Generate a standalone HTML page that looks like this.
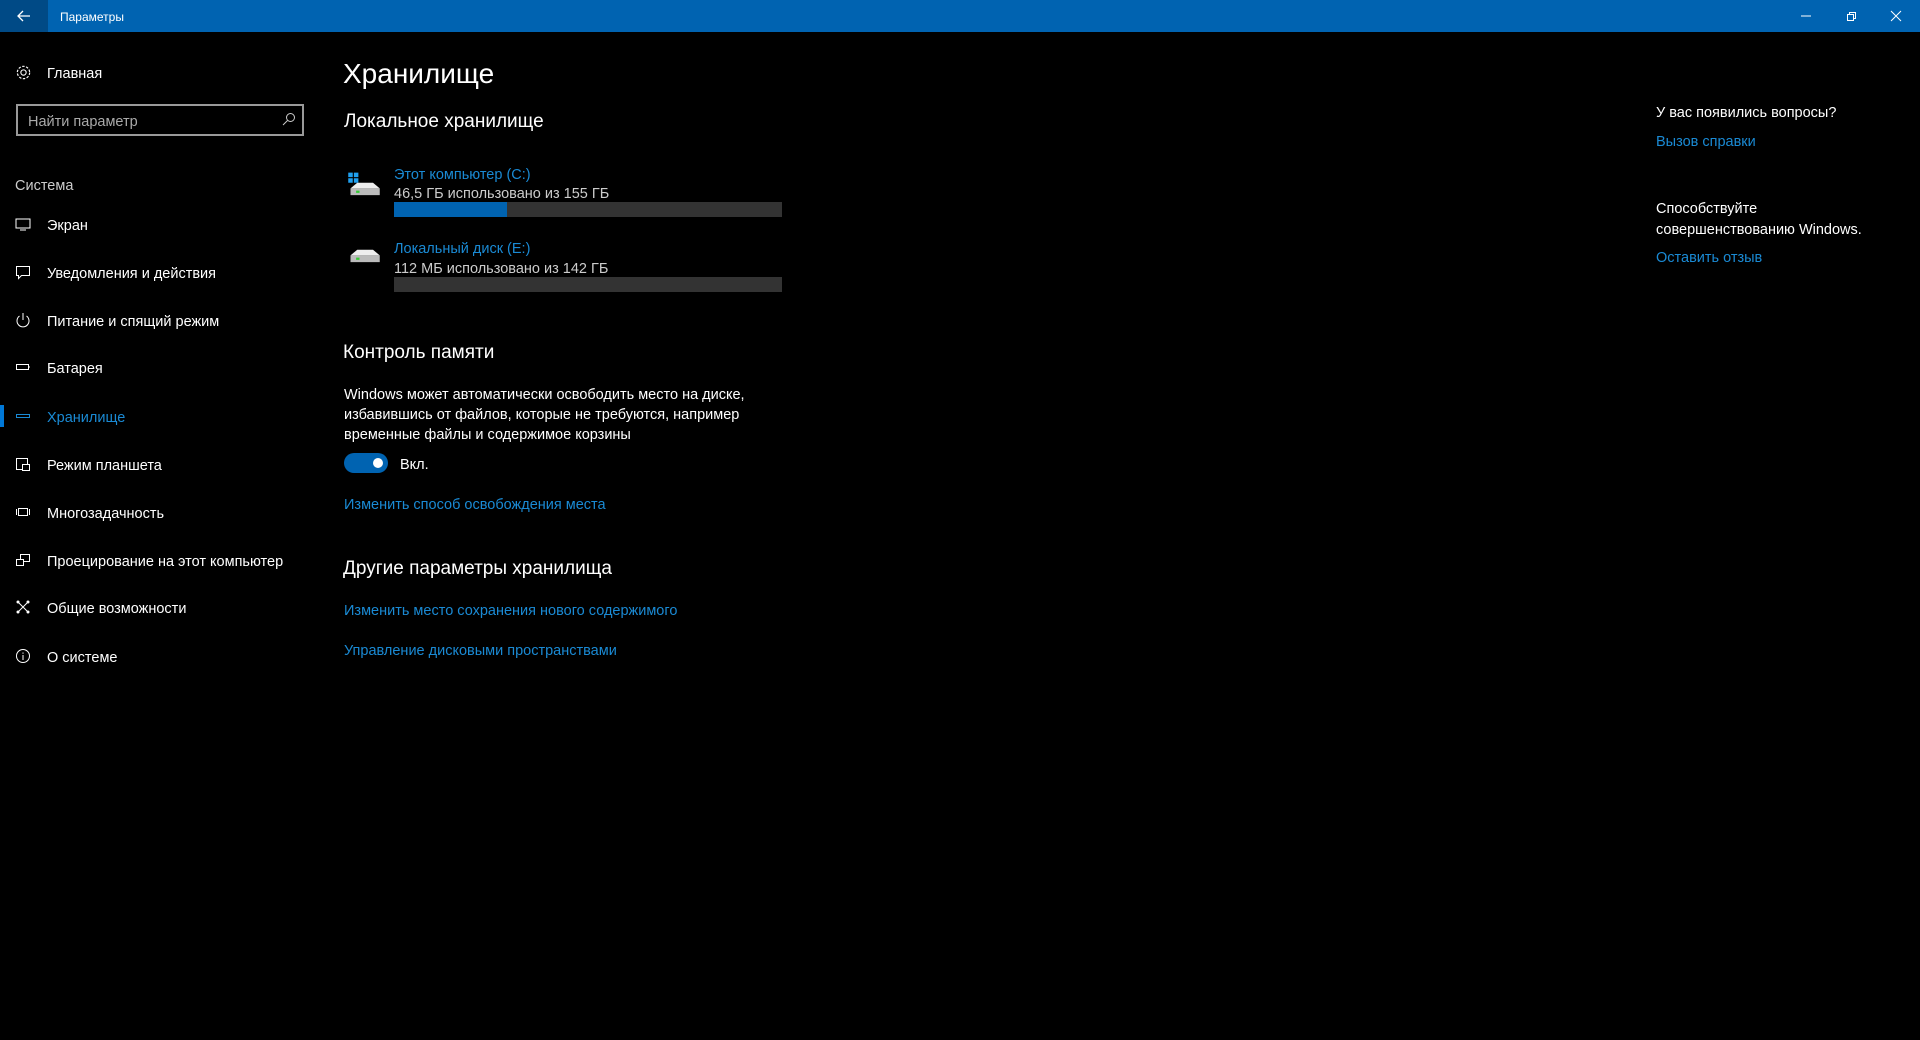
<!DOCTYPE html>
<html><head><meta charset="utf-8"><style>
*{margin:0;padding:0;box-sizing:border-box}
body{width:1920px;height:1040px;background:#000;color:#fff;font-family:"Liberation Sans","DejaVu Sans",sans-serif;font-size:14.5px;position:relative;overflow:hidden}
.a{position:absolute;white-space:nowrap;line-height:20px;margin-top:2px}
.tb{position:absolute;left:0;top:0;width:1920px;height:32px;background:#0063b1}
.bk{position:absolute;left:0;top:0;width:48px;height:32px;background:#004a86}
.blue{color:#1a8ad4}
.gray{color:#ccc}
svg{position:absolute}
.nav{position:absolute;left:47px;line-height:20px;margin-top:2px}
.ic{position:absolute;left:15px;width:16px;height:16px}
</style></head><body>
<div class="tb"><div class="bk"></div>
<svg style="left:16px;top:8px" width="16" height="16" viewBox="0 0 16 16"><path d="M14 8H2M7 3L2 8l5 5" stroke="#fff" stroke-width="1.3" fill="none"/></svg>
<div class="a" style="left:60px;top:5px;font-size:12px">Параметры</div>
<svg style="left:1800px;top:10px" width="12" height="12"><path d="M1 6h10" stroke="#fff"/></svg>
<svg style="left:1845px;top:10px" width="12" height="12"><path d="M2.5 4.5h6v6h-6zM4.5 4.5v-2h6v6h-2" stroke="#fff" fill="none"/></svg>
<svg style="left:1890px;top:10px" width="12" height="12"><path d="M1 1l10 10M11 1L1 11" stroke="#fff"/></svg>
</div>

<svg style="left:15px;top:64px" width="17" height="17" viewBox="0 0 16 16"><circle cx="8" cy="8" r="2.5" stroke="#fff" fill="none"/><circle cx="8" cy="8" r="5.8" stroke="#fff" stroke-width="1.1" stroke-dasharray="2.3 1.4" fill="none"/></svg>
<div class="nav" style="top:62px">Главная</div>
<div style="position:absolute;left:16px;top:104px;width:288px;height:32px;border:2px solid #999"></div>
<div class="a" style="left:28px;top:110px;color:#aaa">Найти параметр</div>
<svg style="left:282px;top:112px" width="14" height="14" viewBox="0 0 14 14"><circle cx="8.5" cy="5.5" r="4" stroke="#ccc" fill="none"/><path d="M5.5 8.5L1 13" stroke="#ccc"/></svg>
<div class="a" style="left:15px;top:174px;color:#ccc">Система</div>

<svg class="ic" style="top:216px" viewBox="0 0 16 16"><rect x="1" y="3" width="14" height="9" stroke="#fff" fill="none"/><path d="M5 14h6" stroke="#fff"/></svg>
<div class="nav" style="top:214px">Экран</div>
<svg class="ic" style="top:264px" viewBox="0 0 16 16"><path d="M1.5 2.5h13v9h-8l-3 3v-3h-2z" stroke="#fff" fill="none"/></svg>
<div class="nav" style="top:262px">Уведомления и действия</div>
<svg class="ic" style="top:312px" viewBox="0 0 16 16"><path d="M4.5 4a6 6 0 1 0 7 0M8 1v7" stroke="#fff" fill="none"/></svg>
<div class="nav" style="top:310px">Питание и спящий режим</div>
<svg class="ic" style="top:359px" viewBox="0 0 16 16"><rect x="1.5" y="5.5" width="12" height="5" stroke="#fff" fill="none"/><path d="M14 7v2" stroke="#fff"/></svg>
<div class="nav" style="top:357px">Батарея</div>
<div style="position:absolute;left:0;top:405px;width:4px;height:22px;background:#0078d7"></div>
<svg class="ic" style="top:408px" viewBox="0 0 16 16"><rect x="1.5" y="6.5" width="13" height="3" stroke="#1a8ad4" fill="none"/></svg>
<div class="nav blue" style="top:406px">Хранилище</div>
<svg class="ic" style="top:456px" viewBox="0 0 16 16"><rect x="1.5" y="2.5" width="11" height="11" stroke="#fff" fill="none"/><rect x="7.5" y="8.5" width="7" height="6" stroke="#fff" fill="#000"/></svg>
<div class="nav" style="top:454px">Режим планшета</div>
<svg class="ic" style="top:504px" viewBox="0 0 16 16"><rect x="3.5" y="4.5" width="9" height="7" stroke="#fff" fill="none"/><path d="M1.5 5v6M14.5 5v6" stroke="#fff"/></svg>
<div class="nav" style="top:502px">Многозадачность</div>
<svg class="ic" style="top:552px" viewBox="0 0 16 16"><rect x="5.5" y="2.5" width="9" height="7" stroke="#fff" fill="none"/><rect x="1.5" y="7.5" width="7" height="6" stroke="#fff" fill="#000"/></svg>
<div class="nav" style="top:550px">Проецирование на этот компьютер</div>
<svg class="ic" style="top:599px" viewBox="0 0 16 16"><path d="M3 3l10 10M13 3L3 13" stroke="#fff"/><circle cx="3" cy="3" r="1.5" fill="#fff"/><circle cx="13" cy="3" r="1.5" fill="#fff"/><circle cx="3" cy="13" r="1.5" fill="#fff"/><circle cx="13" cy="13" r="1.5" fill="#fff"/></svg>
<div class="nav" style="top:597px">Общие возможности</div>
<svg class="ic" style="top:648px" viewBox="0 0 16 16"><circle cx="8" cy="8" r="6.5" stroke="#fff" fill="none"/><path d="M8 7v5M8 4.5v1.3" stroke="#fff"/></svg>
<div class="nav" style="top:646px">О системе</div>

<div class="a" style="left:343px;top:56px;font-size:28px;line-height:32px;font-weight:300">Хранилище</div>
<div class="a" style="left:344px;top:108px;font-size:19px;line-height:24px">Локальное хранилище</div>

<svg style="left:346px;top:170px" width="36" height="30" viewBox="0 0 32 26"><rect x="2" y="2" width="4" height="4" fill="#1fa0f0"/><rect x="7" y="2" width="4" height="4" fill="#1fa0f0"/><rect x="2" y="7" width="4" height="4" fill="#1fa0f0"/><rect x="7" y="7" width="4" height="4" fill="#1fa0f0"/><path d="M4 16l6-5h14l6 5z" fill="#eee"/><rect x="4" y="16" width="26" height="6" fill="#bbb"/><rect x="9" y="18" width="3" height="2" fill="#3c3"/></svg>
<div class="a blue" style="left:394px;top:163px">Этот компьютер (C:)</div>
<div class="a gray" style="left:394px;top:182px">46,5 ГБ использовано из 155 ГБ</div>
<div style="position:absolute;left:394px;top:202px;width:388px;height:15px;background:#333"><div style="width:113px;height:15px;background:#0063b1"></div></div>

<svg style="left:346px;top:246px" width="36" height="30" viewBox="0 0 32 26"><path d="M4 8l6-5h14l6 5z" fill="#eee"/><rect x="4" y="8" width="26" height="6" fill="#bbb"/><rect x="9" y="10" width="3" height="2" fill="#3c3"/></svg>
<div class="a blue" style="left:394px;top:237px">Локальный диск (E:)</div>
<div class="a gray" style="left:394px;top:257px">112 МБ использовано из 142 ГБ</div>
<div style="position:absolute;left:394px;top:277px;width:388px;height:15px;background:#333"></div>

<div class="a" style="left:343px;top:339px;font-size:19px;line-height:24px">Контроль памяти</div>
<div class="a" style="left:344px;top:383px">Windows может автоматически освободить место на диске,</div>
<div class="a" style="left:344px;top:403px">избавившись от файлов, которые не требуются, например</div>
<div class="a" style="left:344px;top:423px">временные файлы и содержимое корзины</div>
<div style="position:absolute;left:344px;top:453px;width:44px;height:20px;border-radius:10px;background:#0063b1"><div style="position:absolute;left:29px;top:5px;width:10px;height:10px;border-radius:5px;background:#fff"></div></div>
<div class="a" style="left:400px;top:453px">Вкл.</div>
<div class="a blue" style="left:344px;top:493px">Изменить способ освобождения места</div>

<div class="a" style="left:343px;top:555px;font-size:19px;line-height:24px">Другие параметры хранилища</div>
<div class="a blue" style="left:344px;top:599px">Изменить место сохранения нового содержимого</div>
<div class="a blue" style="left:344px;top:639px">Управление дисковыми пространствами</div>

<div class="a" style="left:1656px;top:101px">У вас появились вопросы?</div>
<div class="a blue" style="left:1656px;top:130px">Вызов справки</div>
<div class="a" style="left:1656px;top:197px">Способствуйте</div>
<div class="a" style="left:1656px;top:218px">совершенствованию Windows.</div>
<div class="a blue" style="left:1656px;top:246px">Оставить отзыв</div>
</body></html>
